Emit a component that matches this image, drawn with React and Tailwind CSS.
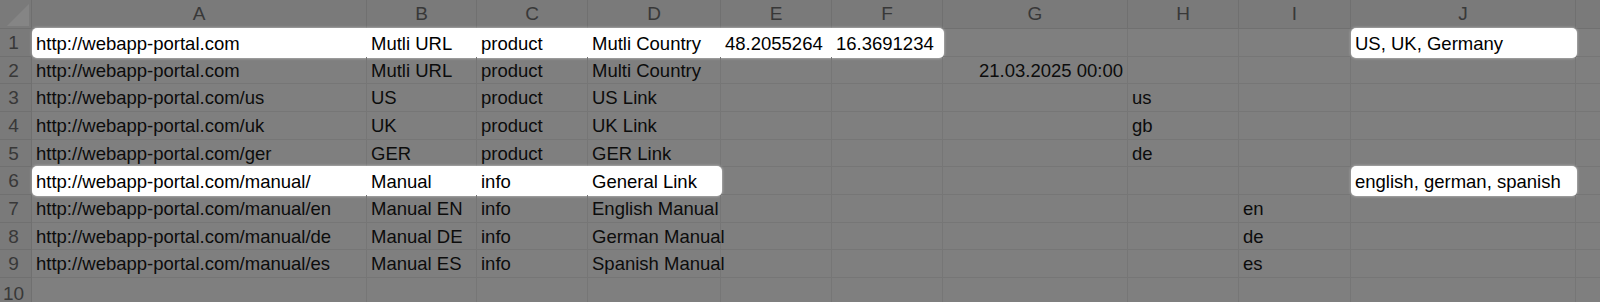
const COLS = ["A", "B", "C", "D", "E", "F", "G", "H", "I", "J"];

const DATA = [
  ["http://webapp-portal.com", "Mutli URL", "product", "Mutli Country", "48.2055264", "16.3691234", "", "", "", "US, UK, Germany"],
  ["http://webapp-portal.com", "Mutli URL", "product", "Multi Country", "", "", "21.03.2025 00:00", "", "", ""],
  ["http://webapp-portal.com/us", "US", "product", "US Link", "", "", "", "us", "", ""],
  ["http://webapp-portal.com/uk", "UK", "product", "UK Link", "", "", "", "gb", "", ""],
  ["http://webapp-portal.com/ger", "GER", "product", "GER Link", "", "", "", "de", "", ""],
  ["http://webapp-portal.com/manual/", "Manual", "info", "General Link", "", "", "", "", "", "english, german, spanish"],
  ["http://webapp-portal.com/manual/en", "Manual EN", "info", "English Manual", "", "", "", "", "en", ""],
  ["http://webapp-portal.com/manual/de", "Manual DE", "info", "German Manual", "", "", "", "", "de", ""],
  ["http://webapp-portal.com/manual/es", "Manual ES", "info", "Spanish Manual", "", "", "", "", "es", ""],
  ["", "", "", "", "", "", "", "", "", ""],
];

// highlighted ranges per row: [first col, last col]
const HIGHLIGHTS = {
  0: [[0, 5], [9, 9]],
  5: [[0, 3], [9, 9]],
};

const SPAN = { 1: "col-span-1", 4: "col-span-4", 6: "col-span-6" };

const Text = ({ value, right }) => (
  <div
    className={`flex items-center h-full px-[4px] pt-[2px] whitespace-nowrap text-[18.5px] leading-none ${
      right ? "justify-end" : ""
    }`}
  >
    {value}
  </div>
);

// split a row into plain cells and white highlighted blocks
const segments = (row, r) => {
  const ranges = HIGHLIGHTS[r] || [];
  const out = [];
  let c = 0;
  while (c < row.length) {
    const range = ranges.find(([from]) => from === c);
    if (range) {
      out.push({ type: "box", from: range[0], to: range[1] });
      c = range[1] + 1;
    } else {
      out.push({ type: "cell", col: c });
      c++;
    }
  }
  return out;
};

export default function App() {
  return (
    <div className="grid h-[302px] w-[1600px] overflow-hidden bg-[#7f7f7f] text-[#0c0c0c] font-['Liberation_Sans',Arial,sans-serif] grid-cols-[32px_335px_110px_111px_133px_111px_111px_185px_111px_112px_225px_1fr] grid-rows-[29px_repeat(9,27.67px)_1fr]">
      {/* header row */}
      <div className="bg-[#7a7a7a] border-r border-b border-[#6f6f6f] flex items-end justify-end pr-[2px] pb-[2px]">
        <svg width="22" height="22" viewBox="0 0 22 22">
          <polygon points="0,22 22,22 22,0" fill="#858585" />
        </svg>
      </div>
      {COLS.map((letter) => (
        <div
          key={letter}
          className="bg-[#7a7a7a] border-r border-b border-[#707070] flex items-center justify-center pt-[1px] text-[19px] text-[#383838]"
        >
          {letter}
        </div>
      ))}
      <div className="bg-[#7a7a7a] border-b border-[#707070]" />

      {/* row numbers + cells */}
      {DATA.map((row, r) => (
        <div key={r} className="contents">
          <div className="bg-[#7a7a7a] border-r border-b border-[#707070] flex items-center justify-center pr-[4px] pt-[2px] text-[19px] text-[#383838]">
            {r + 1}
          </div>
          {segments(row, r).map((seg) =>
            seg.type === "cell" ? (
              <div key={seg.col} className="border-r border-b border-[#767676] min-w-0">
                {row[seg.col] && <Text value={row[seg.col]} right={seg.col === 6} />}
              </div>
            ) : (
              <div
                key={`box-${seg.from}`}
                className={`${SPAN[seg.to - seg.from + 1]} -mt-px mb-[-1px] mr-[-1px] bg-white rounded-[5px] shadow-[0_0_3px_rgba(255,255,255,0.6)] grid grid-cols-subgrid text-black`}
              >
                {row.slice(seg.from, seg.to + 1).map((value, i) => (
                  <Text key={i} value={value} right={seg.from + i === 6} />
                ))}
              </div>
            )
          )}
          <div className="border-b border-[#767676]" />
        </div>
      ))}
    </div>
  );
}
